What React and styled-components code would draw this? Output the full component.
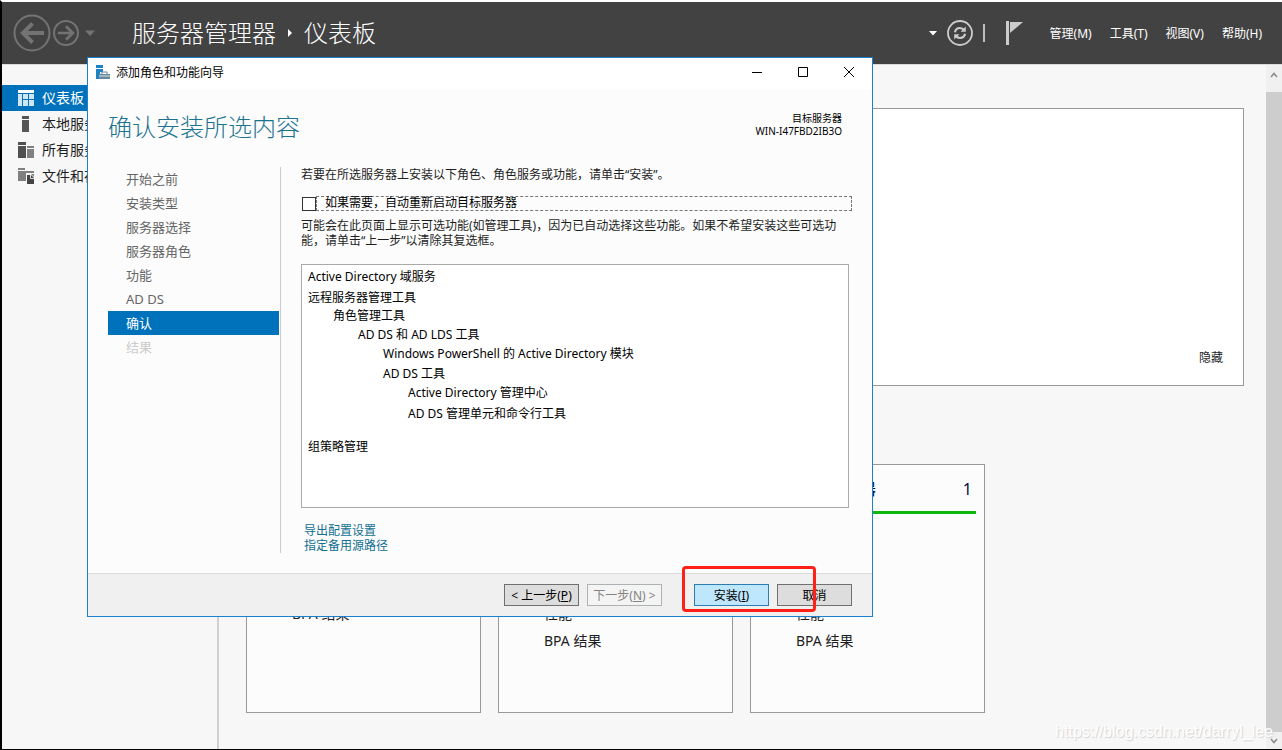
import React, { useState } from "react";
import styled, { createGlobalStyle } from "styled-components";

const GlobalStyle = createGlobalStyle`
  * {
    box-sizing: border-box;
  }

  body {
    margin: 0;
    background-color: #f7f7f7;
  }

  body,
  button,
  input {
    font-family: "Noto Sans", "Noto Sans CJK SC", sans-serif;
    font-size: 12px;
    line-height: 15px;
  }
`;

const Desktop = styled.div`
  position: relative;
  display: flex;
  flex-direction: column;
  min-height: 100vh;
  overflow: hidden;
  border-top: 2px solid #ffffff;
  border-left: 2px solid #000000;
  border-bottom: 1px solid #000000;
`;

const Header = styled.header`
  display: flex;
  align-items: center;
  height: 63px;
  padding: 0 20px 0 11px;
  border-bottom: 1px solid #dcdcdc;
  background-color: #424242;
  color: #ffffff;
`;

const IconButton = styled.button`
  display: flex;
  align-items: center;
  justify-content: center;
  padding: 0;
  border: none;
  background: none;
  color: inherit;
`;

const History = styled.div`
  display: flex;
  align-items: center;
  gap: 2px;
  width: 119px;
  color: #737373;
`;

const HistoryMenu = styled(IconButton)`
  padding-left: 4px;
`;

const Breadcrumb = styled.h1`
  display: flex;
  align-items: center;
  flex: 1;
  gap: 11px;
  margin: 0;
  font-size: 24px;
  font-weight: 300;
  line-height: 32px;
  white-space: nowrap;
`;

const Tools = styled.div`
  display: flex;
  align-items: center;
  gap: 10px;
  margin-right: 26px;
  color: #cccccc;
`;

const Separator = styled.span`
  width: 2px;
  height: 18px;
  margin-right: 10px;
  background-color: #bdbdbd;
`;

const Menu = styled.nav`
  display: flex;
  gap: 18px;
`;

const MenuItem = styled.button`
  padding: 0;
  border: none;
  background: none;
  color: #ffffff;
  white-space: nowrap;
`;

const Body = styled.div`
  display: flex;
  flex: 1;
`;

const Sidebar = styled.nav`
  width: 217px;
  padding-top: 20px;
  border-right: 2px solid #d0d0d0;
`;

const SidebarLink = styled.a`
  display: flex;
  align-items: center;
  gap: 8px;
  height: 26px;
  padding-left: 16px;
  background-color: ${(props) => (props.$active ? "#0072bc" : "transparent")};
  color: ${(props) => (props.$active ? "#ffffff" : "#1e1e1e")};
  font-size: 14px;
  line-height: 20px;
  text-decoration: none;
`;

const Main = styled.main`
  flex: 1;
  padding: 43px 22px 36px 27px;
`;

const Welcome = styled.section`
  display: flex;
  align-items: flex-end;
  justify-content: flex-end;
  height: 278px;
  margin-bottom: 78px;
  padding: 20px;
  border: 1px solid #999999;
  background-color: #ffffff;
`;

const HideButton = styled.button`
  padding: 0;
  border: none;
  background: none;
  color: #1e1e1e;
`;

const Tiles = styled.section`
  display: grid;
  grid-template-columns: repeat(auto-fill, 235px);
  gap: 17px;
`;

const Tile = styled.article`
  min-height: 249px;
  border: 1px solid #999999;
  background-color: #fcfcfc;
`;

const TileHeader = styled.header`
  display: flex;
  align-items: center;
  justify-content: space-between;
  height: 49px;
  margin: 0 8px;
  padding: 2px 4px 0 37px;
  border-bottom: 3px solid #0db80d;
  color: #001040;
  font-size: 16px;
  line-height: 24px;
`;

const TileRows = styled.ul`
  margin: 0;
  padding: 86px 8px 0 45px;
  list-style: none;
`;

const TileRow = styled.li`
  height: 27px;
  color: #1e1e1e;
  font-size: 14px;
  line-height: 27px;
`;

const Scrollbar = styled.div`
  display: flex;
  flex-direction: column;
  width: 16px;
  background-color: #f0f0f0;
  color: #888888;
`;

const ScrollButton = styled(IconButton)`
  height: ${(props) => (props.$up ? "27px" : "17px")};
  padding-bottom: ${(props) => (props.$up ? "8px" : "0")};
`;

const ScrollThumb = styled.div`
  flex: 1;
  background-color: #cdcdcd;
`;

const Dialog = styled.section`
  position: absolute;
  top: 55px;
  left: 85px;
  width: 786px;
  border: 1px solid #1a80d0;
  background-color: #fcfcfc;
  color: #000000;
`;

const TitleBar = styled.header`
  display: flex;
  align-items: center;
  gap: 6px;
  height: 31px;
  padding: 0 0 3px 8px;
  background-color: #ffffff;
`;

const WindowTitle = styled.span`
  flex: 1;
`;

const WindowButtons = styled.div`
  display: flex;
`;

const WindowButton = styled(IconButton)`
  width: 46px;
  height: 28px;
`;

const DialogHeader = styled.div`
  display: flex;
  justify-content: space-between;
  height: 78px;
  padding: 22px 30px 0 20px;
`;

const DialogHeading = styled.h2`
  margin: 0;
  color: #1b7390;
  font-size: 24px;
  font-weight: 300;
  line-height: 32px;
`;

const Target = styled.div`
  padding-top: 1px;
  font-size: 10px;
  line-height: 13px;
  text-align: right;
`;

const DialogBody = styled.div`
  display: flex;
  padding: 0 20px 20px;
`;

const Steps = styled.ol`
  width: 173px;
  margin: 0 20px 0 0;
  padding: 0 1px 0 0;
  border-right: 1px solid #cccccc;
  list-style: none;
`;

const Step = styled.li`
  height: 24px;
  padding-left: 18px;
  background-color: ${(props) => (props.$active ? "#0072bc" : "transparent")};
  color: ${(props) =>
    props.$active ? "#ffffff" : props.$disabled ? "#cccccc" : "#666666"};
  font-size: 13px;
  line-height: 24px;
`;

const Content = styled.div`
  flex: 1;
`;

const Paragraph = styled.p`
  margin: 0;
  color: #1e1e1e;
`;

const RestartOption = styled.label`
  display: flex;
  align-items: center;
  margin: 14px 0 7px;
  padding-left: 1px;
`;

const Checkbox = styled.input`
  appearance: none;
  width: 14px;
  height: 14px;
  margin: 0;
  border: 1px solid #333333;
  background-color: #ffffff;
`;

const FocusLabel = styled.span`
  flex: 1;
  height: 15px;
  padding-left: 8px;
  border: 1px dashed #777777;
  line-height: 12px;
`;

const Selection = styled.ul`
  height: 244px;
  margin: 16px 3px 15px 0;
  padding: 3px 6px;
  border: 1px solid #aaaaaa;
  background-color: #ffffff;
  list-style: none;
`;

const SelectionItem = styled.li`
  margin-top: ${(props) => props.$gap || 0}px;
  padding-left: ${(props) => props.$level * 25}px;
  line-height: 18px;
`;

const Links = styled.div`
  display: flex;
  flex-direction: column;
  align-items: flex-start;
  padding-left: 3px;
`;

const ActionLink = styled.a`
  color: #106f91;
  text-decoration: none;
`;

const DialogFooter = styled.footer`
  position: relative;
  display: flex;
  justify-content: flex-end;
  gap: 8px;
  height: 43px;
  padding: 10px 20px 0 0;
  border-top: 1px solid #dcdcdc;
  background-color: #f0f0f0;
`;

const Button = styled.button`
  width: 75px;
  height: 22px;
  padding: 0;
  border: 1px solid ${(props) => (props.$primary ? "#2d7db5" : "#707070")};
  background-color: ${(props) => (props.$primary ? "#bee6fd" : "#dddddd")};
  color: #000000;
  white-space: nowrap;

  &:disabled {
    border-color: #adb2b5;
    background-color: #f4f4f4;
    color: #838383;
  }
`;

const ButtonGroup = styled.div`
  display: flex;
  gap: 8px;
  margin-right: 24px;
`;

const Highlight = styled.div`
  position: absolute;
  top: -8px;
  right: 56px;
  width: 134px;
  height: 46px;
  border: 3px solid #ff2018;
  border-radius: 4px;
  pointer-events: none;
`;

const Watermark = styled.span`
  position: absolute;
  right: 9px;
  bottom: 7px;
  color: #ffffff;
  font-family: "Liberation Sans", sans-serif;
  font-size: 16px;
  line-height: 20px;
  text-shadow: 1px 1px 1px #d0d0d0;
`;

const ArrowCircle = ({ size, back }) => (
  <svg width={size} height={size} viewBox="0 0 38 38" fill="none" stroke="currentColor">
    <circle cx="19" cy="19" r="17.5" strokeWidth={back ? 2 : 3} />
    {back ? (
      <path d="M31 19H10M19.500 9.500 10 19l9.500 9.500" strokeWidth="4" />
    ) : (
      <path d="M7 19h21M19 9l10 10-10 10" strokeWidth="4" />
    )}
  </svg>
);

const Caret = () => (
  <svg width="10" height="10" viewBox="0 0 10 10" fill="currentColor">
    <path d="M0 2.500h10L5 8z" />
  </svg>
);

const RefreshIcon = () => (
  <svg width="26" height="26" viewBox="0 0 26 26" fill="none" stroke="currentColor">
    <circle cx="13" cy="13" r="12" strokeWidth="1.800" />
    <path d="M8 12.200c.5-3 2-4.200 5-4.200 2 0 3 .6 4.300 2.200M18 13.800c-.5 3-2 4.200-5 4.200-2 0-3-.6-4.300-2.200" strokeWidth="2.200" />
    <path d="M18.800 6.500v5.200h-5.200zM7.200 19.500v-5.200h5.200z" fill="currentColor" stroke="none" />
  </svg>
);

const FlagIcon = () => (
  <svg width="19" height="26" viewBox="0 0 19 26" fill="currentColor">
    <path d="M1 1h3v24H1z" />
    <path d="M5 2h13L5 13z" />
  </svg>
);

const Chevron = ({ up }) => (
  <svg width="8" height="6" viewBox="0 0 8 6" fill="none" stroke="currentColor" strokeWidth="1.500">
    <path d={up ? "M1 5l3-3.500L7 5" : "M1 1l3 3.500L7 1"} />
  </svg>
);

const icons = {
  dashboard: (
    <>
      <path d="M0 0h16v3H0z" fill="#fff" />
      <path d="M0 4h4v12H0zM5 4h5v5H5zM11 4h5v5h-5zM5 10h5v6H5zM11 10h5v6h-5z" fill="#cfe6f6" />
    </>
  ),
  server: <path d="M4 0h7v3H4zM4 4h7v12H4z" fill="#555" />,
  servers: (
    <>
      <path d="M0 0h8v3H0zM0 4h8v12H0z" fill="#505050" />
      <path d="M9 4h7v2H9zM9 7h7v9H9z" fill="#808080" />
    </>
  ),
  files: (
    <>
      <path d="M0 0h7v2H0zM0 3h8v10H0z" fill="#808080" />
      <path d="M8 3h8v2H8z" fill="#808080" />
      <path d="M9 7h4l3 3v6H9z" fill="#444" />
      <path d="M8 6h8v3l-3-3z" fill="#808080" />
      <path d="M12.500 7v3.500H16" fill="none" stroke="#ddd" />
    </>
  ),
};

const WizardIcon = () => (
  <svg width="14" height="15" viewBox="0 0 14 15">
    <path d="M0 0h7v3H0zM0 4h7v3H4v7H0z" fill="#1d83c4" />
    <path d="M3 9h11v5H3z" fill="#68899b" />
    <path d="M6 9V7h5v2" fill="none" stroke="#68899b" />
    <path d="M3 11h11" stroke="#d5e2e8" />
  </svg>
);

const sidebarItems = [
  { icon: "dashboard", label: "仪表板", active: true },
  { icon: "server", label: "本地服务器" },
  { icon: "servers", label: "所有服务器" },
  { icon: "files", label: "文件和存储" },
];

const tiles = [
  { rows: ["BPA 结果"] },
  { rows: ["性能", "BPA 结果"] },
  { title: "所有服务器", count: 1, rows: ["性能", "BPA 结果"] },
];

const steps = [
  "开始之前",
  "安装类型",
  "服务器选择",
  "服务器角色",
  "功能",
  "AD DS",
  "确认",
  "结果",
];

const selection = [
  { text: "Active Directory 域服务", level: 0 },
  { text: "远程服务器管理工具", level: 0, gap: 3 },
  { text: "角色管理工具", level: 1 },
  { text: "AD DS 和 AD LDS 工具", level: 2, gap: 1 },
  { text: "Windows PowerShell 的 Active Directory 模块", level: 3, gap: 1 },
  { text: "AD DS 工具", level: 3, gap: 2 },
  { text: "Active Directory 管理中心", level: 4, gap: 1 },
  { text: "AD DS 管理单元和命令行工具", level: 4, gap: 3 },
  { text: "组策略管理", level: 0, gap: 15 },
];

function Wizard() {
  const [restart, setRestart] = useState(false);

  return (
    <Dialog role="dialog" aria-label="添加角色和功能向导">
      <TitleBar>
        <WizardIcon />
        <WindowTitle>添加角色和功能向导</WindowTitle>
        <WindowButtons>
          <WindowButton aria-label="最小化">
            <svg width="10" height="10" stroke="#000">
              <path d="M0 5.500h10" />
            </svg>
          </WindowButton>
          <WindowButton aria-label="最大化">
            <svg width="10" height="10" fill="none" stroke="#000">
              <path d="M.5.5h9v9h-9z" />
            </svg>
          </WindowButton>
          <WindowButton aria-label="关闭">
            <svg width="10" height="10" stroke="#000">
              <path d="M0 0l10 10M10 0L0 10" />
            </svg>
          </WindowButton>
        </WindowButtons>
      </TitleBar>
      <DialogHeader>
        <DialogHeading>确认安装所选内容</DialogHeading>
        <Target>
          目标服务器
          <br />
          WIN-I47FBD2IB3O
        </Target>
      </DialogHeader>
      <DialogBody>
        <Steps>
          {steps.map((step) => (
            <Step key={step} $active={step === "确认"} $disabled={step === "结果"}>
              {step}
            </Step>
          ))}
        </Steps>
        <Content>
          <Paragraph>
            若要在所选服务器上安装以下角色、角色服务或功能，请单击“安装”。
          </Paragraph>
          <RestartOption>
            <Checkbox
              type="checkbox"
              checked={restart}
              onChange={(e) => setRestart(e.target.checked)}
            />
            <FocusLabel>如果需要，自动重新启动目标服务器</FocusLabel>
          </RestartOption>
          <Paragraph>
            可能会在此页面上显示可选功能(如管理工具)，因为已自动选择这些功能。如果不希望安装这些可选功能，请单击“上一步”以清除其复选框。
          </Paragraph>
          <Selection>
            {selection.map((item) => (
              <SelectionItem key={item.text} $level={item.level} $gap={item.gap}>
                {item.text}
              </SelectionItem>
            ))}
          </Selection>
          <Links>
            <ActionLink href="#export">导出配置设置</ActionLink>
            <ActionLink href="#source">指定备用源路径</ActionLink>
          </Links>
        </Content>
      </DialogBody>
      <DialogFooter>
        <ButtonGroup>
          <Button>
            &lt; 上一步(<u>P</u>)
          </Button>
          <Button disabled>
            下一步(<u>N</u>) &gt;
          </Button>
        </ButtonGroup>
        <Button $primary>
          安装(<u>I</u>)
        </Button>
        <Button>取消</Button>
        <Highlight />
      </DialogFooter>
    </Dialog>
  );
}

function App() {
  return (
    <Desktop>
      <GlobalStyle />
      <Header>
        <History>
          <IconButton aria-label="后退">
            <ArrowCircle size={38} back />
          </IconButton>
          <IconButton aria-label="前进">
            <ArrowCircle size={26} />
          </IconButton>
          <HistoryMenu aria-label="历史记录">
            <Caret />
          </HistoryMenu>
        </History>
        <Breadcrumb>
          服务器管理器
          <svg width="6" height="8" viewBox="0 0 6 8" fill="#fff">
            <path d="M1 0l4 4-4 4z" />
          </svg>
          仪表板
        </Breadcrumb>
        <Tools>
          <IconButton aria-label="更多">
            <svg width="8" height="5" viewBox="0 0 8 5" fill="#fff">
              <path d="M0 0h8L4 4.500z" />
            </svg>
          </IconButton>
          <IconButton aria-label="刷新">
            <RefreshIcon />
          </IconButton>
          <Separator />
          <IconButton aria-label="通知">
            <FlagIcon />
          </IconButton>
        </Tools>
        <Menu>
          <MenuItem>管理(M)</MenuItem>
          <MenuItem>工具(T)</MenuItem>
          <MenuItem>视图(V)</MenuItem>
          <MenuItem>帮助(H)</MenuItem>
        </Menu>
      </Header>
      <Body>
        <Sidebar>
          {sidebarItems.map((item) => (
            <SidebarLink key={item.icon} href={`#${item.icon}`} $active={item.active}>
              <svg width="16" height="16">
                {icons[item.icon]}
              </svg>
              {item.label}
            </SidebarLink>
          ))}
        </Sidebar>
        <Main>
          <Welcome>
            <HideButton>隐藏</HideButton>
          </Welcome>
          <Tiles>
            {tiles.map((tile, index) => (
              <Tile key={index}>
                <TileHeader>
                  <span>{tile.title}</span>
                  <span>{tile.count}</span>
                </TileHeader>
                <TileRows>
                  {tile.rows.map((row) => (
                    <TileRow key={row}>{row}</TileRow>
                  ))}
                </TileRows>
              </Tile>
            ))}
          </Tiles>
        </Main>
        <Scrollbar>
          <ScrollButton $up aria-label="向上滚动">
            <Chevron up />
          </ScrollButton>
          <ScrollThumb />
          <ScrollButton aria-label="向下滚动">
            <Chevron />
          </ScrollButton>
        </Scrollbar>
      </Body>
      <Wizard />
      <Watermark>https://blog.csdn.net/darryl_lee</Watermark>
    </Desktop>
  );
}

export default App;
